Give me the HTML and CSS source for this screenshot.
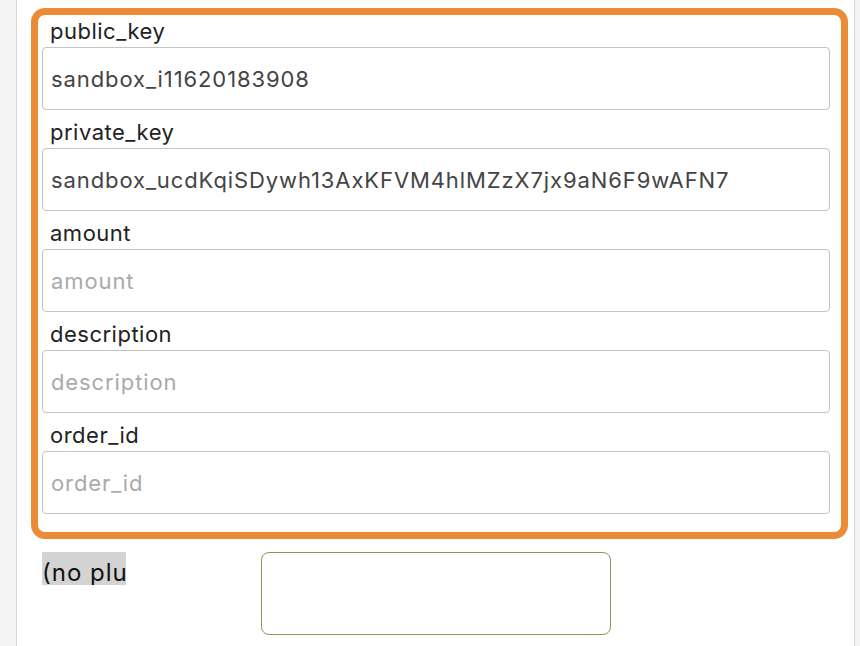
FILE: index.html
```html
<!DOCTYPE html>
<html>
<head>
<meta charset="utf-8">
<link rel="stylesheet" href="styles.css">
</head>
<body>
<div class="page">
  <form class="form">
    <div class="group">
      <label class="label">public_key</label>
      <input class="field" type="text" value="sandbox_i11620183908">
    </div>
    <div class="group">
      <label class="label">private_key</label>
      <input class="field" type="text" value="sandbox_ucdKqiSDywh13AxKFVM4hlMZzX7jx9aN6F9wAFN7">
    </div>
    <div class="group">
      <label class="label">amount</label>
      <input class="field" type="text" placeholder="amount">
    </div>
    <div class="group">
      <label class="label">description</label>
      <input class="field" type="text" placeholder="description">
    </div>
    <div class="group">
      <label class="label">order_id</label>
      <input class="field" type="text" placeholder="order_id">
    </div>
  </form>
  <div class="bottom">
    <div class="plugin">(no plugin)</div>
    <div class="greenbox"></div>
  </div>
</div>
</body>
</html>
```
FILE: styles.css
```css
html, body {
  margin: 0;
  padding: 0;
  background: #f3f3f3;
  font-family: Inter, "Noto Sans", sans-serif;
}
.page {
  margin-left: 16px;
  width: 839px;
  height: 646px;
  background: #ffffff;
  border-left: 1px solid #d8d8d8;
  border-right: 1px solid #d8d8d8;
  box-sizing: border-box;
  padding-top: 8px;
  overflow: hidden;
}
.form {
  margin: 0 0 0 14px;
  width: 817px;
  box-sizing: border-box;
  border: 7px solid #ec8b36;
  border-radius: 14px;
  padding: 0 11px 18px 4px;
  display: flex;
  flex-direction: column;
  gap: 6px;
}
.group {
  display: flex;
  flex-direction: column;
}
.label {
  height: 32px;
  line-height: 32px;
  padding-left: 8px;
  font-size: 22px;
  letter-spacing: 0.5px;
  color: #222;
}
.field {
  height: 63px;
  box-sizing: border-box;
  width: 788px;
  border: 1px solid #c4c4c4;
  border-radius: 4px;
  padding: 0 8px;
  font-family: Inter, "Noto Sans", sans-serif;
  font-size: 22px;
  letter-spacing: 0.9px;
  color: #444;
  background: #fff;
  outline: none;
}
.field::placeholder {
  color: #aaa;
}
.bottom {
  display: flex;
  align-items: flex-start;
  margin-top: 13px;
  padding-left: 25px;
}
.plugin {
  width: 84px;
  height: 33px;
  overflow: hidden;
  white-space: nowrap;
  background: #d3d3d3;
  font-size: 24px;
  letter-spacing: 1px;
  line-height: 42px;
  color: #111;
}
.greenbox {
  margin-left: 135px;
  width: 350px;
  height: 83px;
  box-sizing: border-box;
  border: 1px solid #7d9e55;
  border-radius: 8px;
}
```
